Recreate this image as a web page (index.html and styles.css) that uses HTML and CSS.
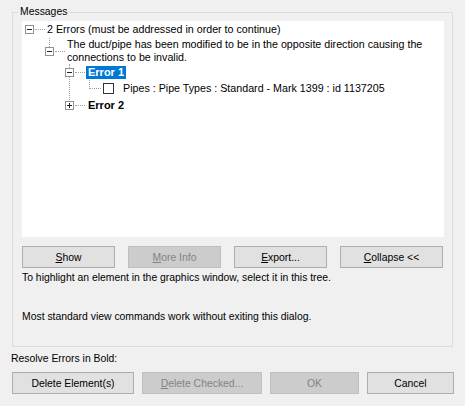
FILE: index.html
```html
<!DOCTYPE html>
<html>
<head>
<meta charset="utf-8">
<title>Messages</title>
<link rel="stylesheet" href="styles.css">
</head>
<body>
<div class="dialog">
  <fieldset class="group">
    <legend>Messages</legend>
    <div class="tree">
      <div class="row r1">
        <span class="exp"></span><span class="hl"></span><span class="txt">2 Errors (must be addressed in order to continue)</span>
      </div>
      <div class="row r2">
        <span class="exp"></span><span class="hl"></span><span class="txt">The duct/pipe has been modified to be in the opposite direction causing the<br>connections to be invalid.</span>
      </div>
      <div class="row r3">
        <span class="exp"></span><span class="hl"></span><span class="bold sel">Error 1</span>
      </div>
      <div class="row r4">
        <span class="hl hl4"></span><span class="chk"></span><span class="txt t4">Pipes : Pipe Types : Standard - Mark 1399 : id 1137205</span>
      </div>
      <div class="row r5">
        <span class="exp plus"></span><span class="hl"></span><span class="bold">Error 2</span>
      </div>
    </div>
    <div class="btns top">
      <button class="btn w93"><u>S</u>how</button>
      <button class="btn w93 dis"><u>M</u>ore Info</button>
      <button class="btn w93"><u>E</u>xport...</button>
      <button class="btn w103"><u>C</u>ollapse &lt;&lt;</button>
    </div>
    <p class="note n1">To highlight an element in the graphics window, select it in this tree.</p>
    <p class="note n2">Most standard view commands work without exiting this dialog.</p>
  </fieldset>
  <div class="resolve">Resolve Errors in Bold:</div>
  <div class="btns bottom">
    <button class="btn w122">Delete Element(s)</button>
    <button class="btn w120 dis"><u>D</u>elete Checked...</button>
    <button class="btn w89 dis">OK</button>
    <button class="btn w87">Cancel</button>
  </div>
</div>
</body>
</html>
```

FILE: styles.css
```css
html, body {
  margin: 0;
  padding: 0;
}

body {
  background: #f0f0f0;
  width: 465px;
  height: 406px;
  overflow: hidden;
  font-family: "Liberation Sans", Arial, sans-serif;
  font-size: 10.4px;
  color: #000;
}

.dialog {
  padding-top: 4px;
}

.group {
  margin: 0 0 0 12px;
  width: 441px;
  min-width: 0;
  box-sizing: border-box;
  border: 1px solid #dcdcdc;
  padding: 1px 8px 21px 9px;
}

.group legend {
  padding: 0 2px;
  margin-left: -4px;
  line-height: 16px;
}

.tree {
  background: #fff;
  height: 216px;
  position: relative;
  font-size: 10.7px;
}

.row {
  position: relative;
  display: flex;
  align-items: center;
  white-space: nowrap;
}

.row::before {
  content: "";
  position: absolute;
  top: 0;
  width: 0;
  border-left: 1px dotted #a0a0a0;
}

.r1 { height: 17px; padding-left: 3px; }
.r1::before { display: none; }

.r2 { height: 26px; padding-left: 23px; }
.r2::before { left: 27px; height: 9px; }

.r3 { height: 16px; padding-left: 43px; }
.r3::before { left: 47px; height: 38px; }

.r4 { height: 17px; padding-left: 68px; }
.r4::before { left: 67px; height: 9px; }

.r5 { height: 16px; padding-left: 43px; }
.r5::before { display: none; }

.exp {
  flex: none;
  width: 9px;
  height: 9px;
  box-sizing: border-box;
  border: 1px solid #919191;
  background: #fff;
  position: relative;
  z-index: 1;
}

.exp::before {
  content: "";
  position: absolute;
  left: 1px;
  top: 3px;
  width: 5px;
  height: 1px;
  background: #222;
}

.exp.plus::after {
  content: "";
  position: absolute;
  left: 3px;
  top: 1px;
  width: 1px;
  height: 5px;
  background: #222;
}

.hl {
  flex: none;
  width: 10px;
  height: 0;
  margin-left: 1px;
  border-top: 1px dotted #a0a0a0;
}

.hl4 {
  width: 11px;
  margin-left: 0;
}

.txt {
  margin-left: 2px;
  line-height: 13px;
}

.t4 {
  margin-left: 9px;
}

.chk {
  flex: none;
  width: 11px;
  height: 11px;
  box-sizing: border-box;
  border: 1px solid #333;
  background: #fff;
  margin-left: 2px;
}

.bold {
  font-weight: bold;
  font-size: 11px;
  margin-left: 1px;
  padding: 0 2px;
  line-height: 13px;
}

.sel {
  background: #0078d7;
  color: #fff;
}

.btns {
  display: flex;
}

.btns.top {
  gap: 13px;
  margin-top: 9px;
}

.btns.bottom {
  gap: 8px;
  margin: 5px 0 0 12px;
}

.btn {
  height: 22px;
  box-sizing: border-box;
  border: 1px solid #adadad;
  background: #e1e1e1;
  font: inherit;
  color: #000;
  padding: 0;
  margin: 0;
}

.btn.dis {
  background: #cccccc;
  border-color: #bfbfbf;
  color: #838383;
}

.w93 { width: 93px; }
.w103 { width: 103px; }
.w122 { width: 122px; }
.w120 { width: 120px; }
.w89 { width: 89px; }
.w87 { width: 87px; }

.note {
  margin: 0;
  line-height: 16px;
}

.n1 { margin-top: 2px; }
.n2 { margin-top: 23px; }

.resolve {
  margin: 4px 0 0 11px;
  line-height: 16px;
}
```
